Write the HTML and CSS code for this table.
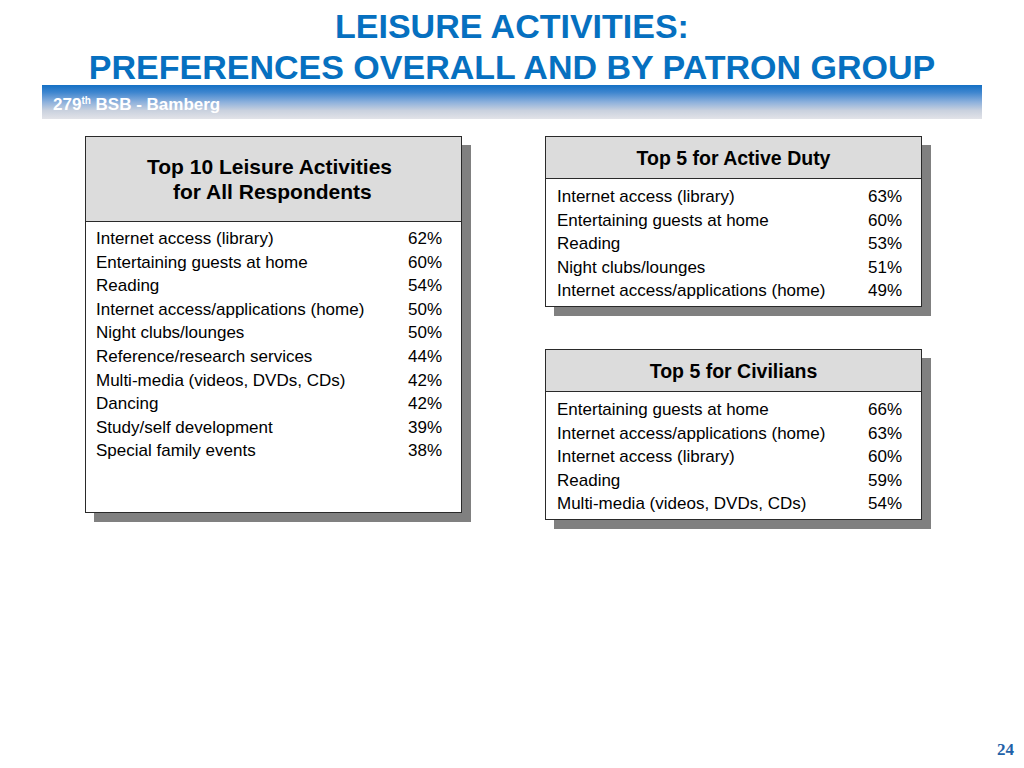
FILE: index.html
```html
<!DOCTYPE html>
<html lang="en">
<head>
<meta charset="utf-8">
<title>Leisure Activities: Preferences Overall and by Patron Group</title>
<link rel="stylesheet" href="styles.css">
</head>
<body>
<header class="title">
  <h1>LEISURE ACTIVITIES:<br>PREFERENCES OVERALL AND BY PATRON GROUP</h1>
</header>
<div class="banner"><span>279<sup>th</sup> BSB - Bamberg</span></div>
<main class="content">
  <section class="card card-main">
    <h2 class="card-head head-main">Top 10 Leisure Activities<br>&nbsp;for All Respondents</h2>
    <ul class="rows">
      <li><span>Internet access (library)</span><span class="pct">62%</span></li>
      <li><span>Entertaining guests at home</span><span class="pct">60%</span></li>
      <li><span>Reading</span><span class="pct">54%</span></li>
      <li><span>Internet access/applications (home)</span><span class="pct">50%</span></li>
      <li><span>Night clubs/lounges</span><span class="pct">50%</span></li>
      <li><span>Reference/research services</span><span class="pct">44%</span></li>
      <li><span>Multi-media (videos, DVDs, CDs)</span><span class="pct">42%</span></li>
      <li><span>Dancing</span><span class="pct">42%</span></li>
      <li><span>Study/self development</span><span class="pct">39%</span></li>
      <li><span>Special family events</span><span class="pct">38%</span></li>
    </ul>
  </section>
  <div class="col">
    <section class="card card-small">
      <h2 class="card-head head-small">Top 5 for Active Duty</h2>
      <ul class="rows">
        <li><span>Internet access (library)</span><span class="pct">63%</span></li>
        <li><span>Entertaining guests at home</span><span class="pct">60%</span></li>
        <li><span>Reading</span><span class="pct">53%</span></li>
        <li><span>Night clubs/lounges</span><span class="pct">51%</span></li>
        <li><span>Internet access/applications (home)</span><span class="pct">49%</span></li>
      </ul>
    </section>
    <section class="card card-small">
      <h2 class="card-head head-small">Top 5 for Civilians</h2>
      <ul class="rows">
        <li><span>Entertaining guests at home</span><span class="pct">66%</span></li>
        <li><span>Internet access/applications (home)</span><span class="pct">63%</span></li>
        <li><span>Internet access (library)</span><span class="pct">60%</span></li>
        <li><span>Reading</span><span class="pct">59%</span></li>
        <li><span>Multi-media (videos, DVDs, CDs)</span><span class="pct">54%</span></li>
      </ul>
    </section>
  </div>
</main>
<footer class="page-num">24</footer>
</body>
</html>
```

FILE: styles.css
```css
* { box-sizing: border-box; }

html, body {
  margin: 0;
  padding: 0;
  background: #ffffff;
}

body {
  width: 1024px;
  min-height: 768px;
  display: flex;
  flex-direction: column;
  font-family: "Liberation Sans", Arial, sans-serif;
  color: #000;
}

.title {
  height: 85px;
  padding-top: 6px;
}

.title h1 {
  margin: 0;
  font-size: 34px;
  line-height: 41px;
  font-weight: bold;
  text-align: center;
  color: #0670c0;
}

.banner {
  margin-left: 42px;
  width: 940px;
  height: 34px;
  padding: 5px 0 0 11px;
  line-height: 29px;
  background: linear-gradient(to bottom, #1470c4 0%, #3f86cf 22%, #8cb0dc 50%, #c9d1de 75%, #e2e3e8 100%);
  color: #ffffff;
  font-weight: bold;
  font-size: 17px;
}

.banner sup {
  font-size: 10px;
  line-height: 0;
  vertical-align: 6px;
}

.content {
  display: flex;
  align-items: flex-start;
  gap: 83px;
  padding-left: 85px;
  margin-top: 17px;
}

.card {
  width: 377px;
  border: 1px solid #2a2a2a;
  background: #ffffff;
  box-shadow: 9px 9px 0 #808080;
}

.card-main {
  height: 377px;
}

.col {
  display: flex;
  flex-direction: column;
  gap: 42px;
}

.card-head {
  margin: 0;
  background: #dcdcdc;
  border-bottom: 1px solid #2a2a2a;
  text-align: center;
  font-weight: bold;
}

.head-main {
  height: 85px;
  padding: 17px 8px 0 0;
  font-size: 21px;
  line-height: 25px;
}

.head-small {
  height: 42px;
  padding-top: 1px;
  font-size: 19.5px;
  line-height: 40px;
}

.rows {
  list-style: none;
  margin: 0;
  padding: 5px 19px 4px 10px;
  font-size: 17px;
  line-height: 23.6px;
}

.card-small .rows {
  padding: 6px 19px 3px 11px;
}

.rows li {
  display: flex;
  justify-content: space-between;
}

.pct {
  text-align: right;
}

.page-num {
  margin-top: auto;
  padding: 0 10px 8px 0;
  text-align: right;
  font-family: "Liberation Serif", "Times New Roman", serif;
  font-weight: bold;
  font-size: 17px;
  line-height: 20px;
  color: #1f62a8;
}
```
